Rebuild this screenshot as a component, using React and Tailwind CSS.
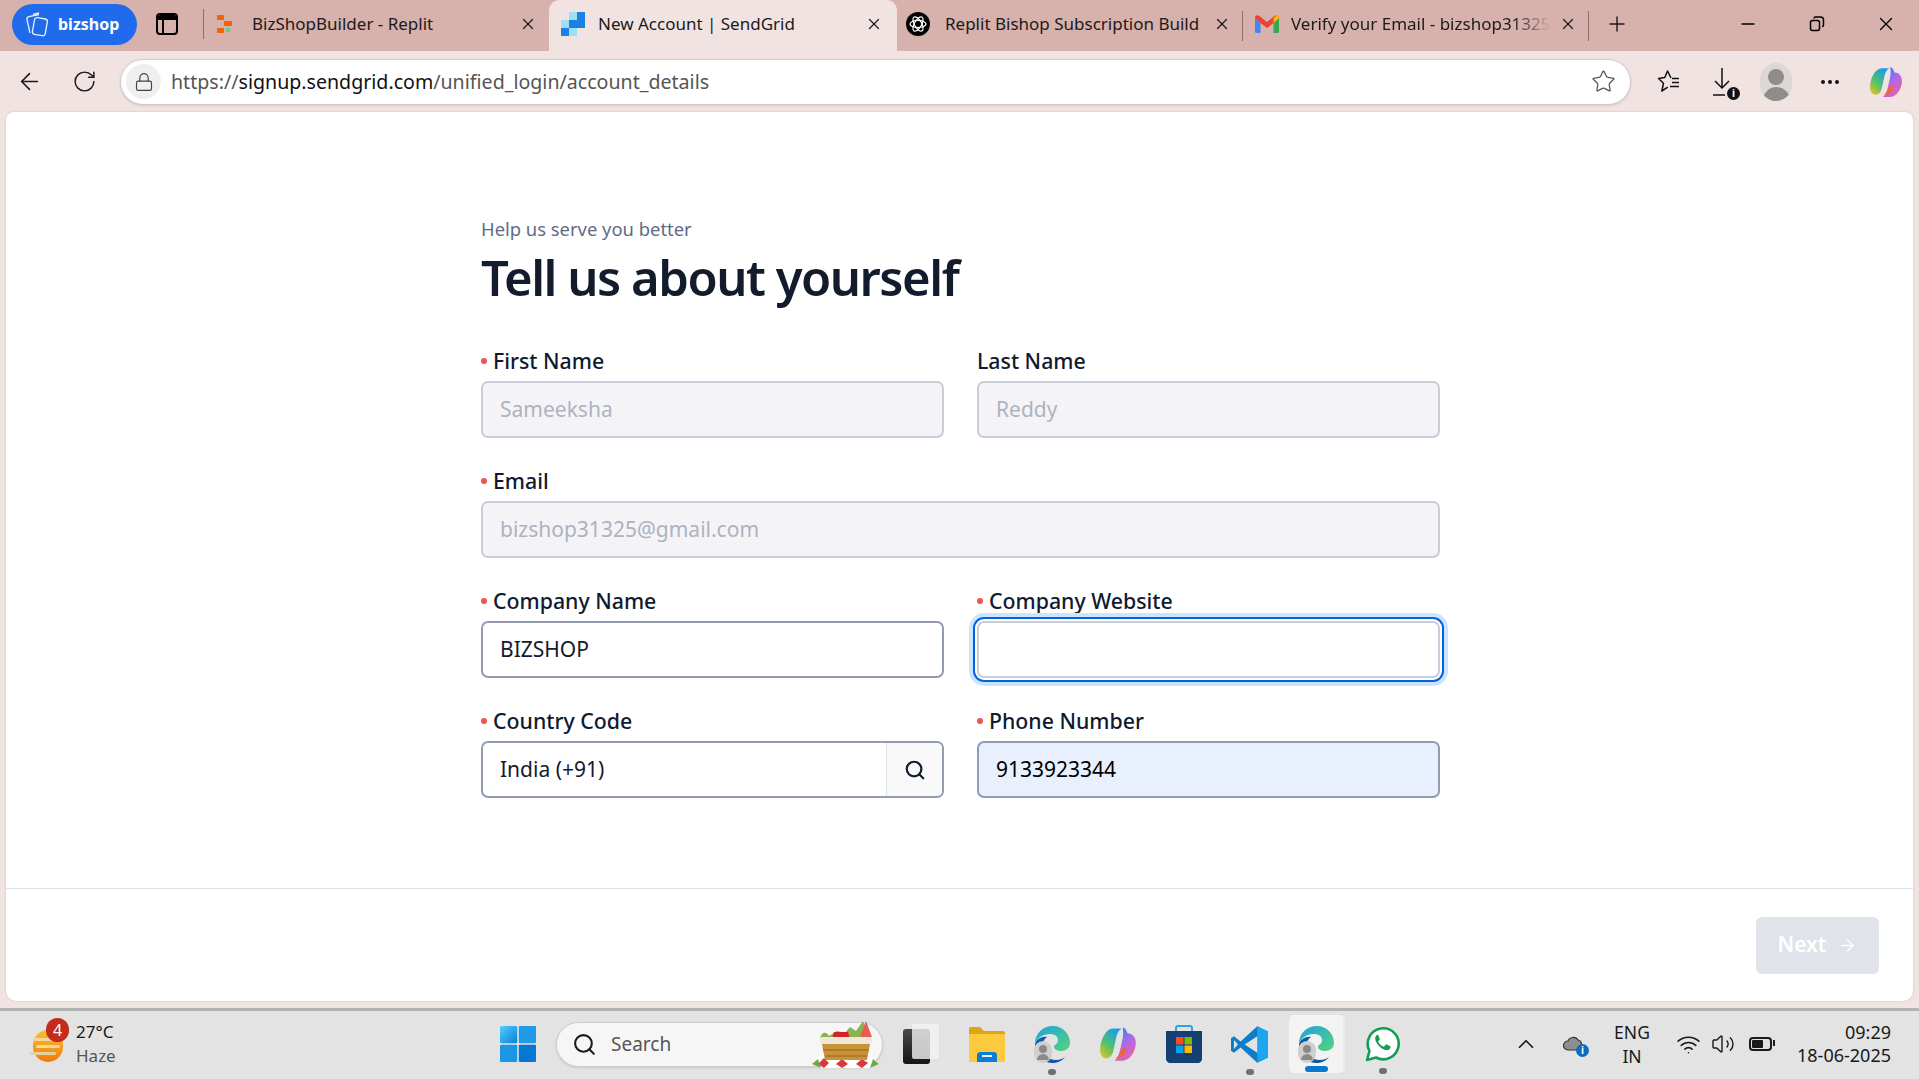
import React from 'react';
import { ArrowLeft, RotateCw, Lock, X, Plus, Minus, Star, Search, ArrowRight, ChevronUp, Wifi, Volume2, Ellipsis } from 'lucide-react';

const segoe = { fontFamily: '"Noto Sans", "Open Sans", sans-serif' };

const ReplitIcon = () => (
  <svg width="18" height="20" viewBox="0 0 18 20">
    <rect x="1" y="1" width="7" height="5" rx="1" fill="#f26207" />
    <rect x="8" y="7" width="8" height="5" rx="1" fill="#f26207" />
    <rect x="1" y="14" width="7" height="5" rx="1" fill="#f26207" />
    <circle cx="12" cy="16" r="2.500" fill="#5fd38d" />
  </svg>
);

const SendGridIcon = () => (
  <svg width="24" height="24" viewBox="0 0 24 24">
    <rect x="8" y="0" width="8" height="8" fill="#9ddff5" />
    <rect x="16" y="0" width="8" height="8" fill="#1a82e2" />
    <rect x="0" y="8" width="8" height="8" fill="#9ddff5" />
    <rect x="8" y="8" width="8" height="8" fill="#1a82e2" />
    <rect x="16" y="8" width="8" height="8" fill="#1a82e2" />
    <rect x="0" y="16" width="8" height="8" fill="#1a82e2" />
    <rect x="8" y="16" width="8" height="8" fill="#9ddff5" />
  </svg>
);

const OpenAiIcon = () => (
  <svg width="24" height="24" viewBox="0 0 24 24">
    <circle cx="12" cy="12" r="12" fill="#000" />
    <g fill="none" stroke="#fff" strokeWidth="1.200">
      <ellipse cx="12" cy="12" rx="8" ry="3.600" />
      <ellipse cx="12" cy="12" rx="8" ry="3.600" transform="rotate(60 12 12)" />
      <ellipse cx="12" cy="12" rx="8" ry="3.600" transform="rotate(120 12 12)" />
    </g>
  </svg>
);

const GmailIcon = () => (
  <svg width="24" height="18" viewBox="0 0 24 18">
    <path d="M0 3v13.500A1.500 1.500 0 0 0 1.500 18H5.500V8z" fill="#4285f4" />
    <path d="M24 3v13.500a1.500 1.500 0 0 1-1.500 1.500H18.500V8z" fill="#34a853" />
    <path d="M0 3c0-3 3-3.500 4.500-2L12 7l7.500-6c1.500-1.500 4.500-1 4.500 2l-5.500 5L12 13 5.500 8z" fill="#ea4335" />
    <path d="M18.500 8 24 3c0-1.500-.8-2.500-2-2.800L18.500 3z" fill="#fbbc04" />
  </svg>
);

const CopilotIcon = ({ size = 32 }) => (
  <svg width={size} height={size} viewBox="0 0 32 32">
    <defs>
      <linearGradient id="cpA" x1="0" y1="1" x2="0.6" y2="0">
        <stop offset="0" stopColor="#f6c21c" />
        <stop offset="0.5" stopColor="#4fc26b" />
        <stop offset="1" stopColor="#1d9fe8" />
      </linearGradient>
      <linearGradient id="cpB" x1="0.2" y1="0" x2="0.8" y2="1">
        <stop offset="0" stopColor="#2a7df0" />
        <stop offset="0.5" stopColor="#b06ae8" />
        <stop offset="1" stopColor="#f0609a" />
      </linearGradient>
    </defs>
    <path d="M12 3h7c-3 2-4 5-5 10l-2 9c-1 4-3 6-6 6-3 0-5-3-5-7 0-9 5-18 11-18z" fill="url(#cpA)" />
    <path d="M20 2c2 0 3 2 4 5 4 0 7 3 7 8 0 6-4 15-11 15h-7c3-2 4-6 5-10l2-9c.5-3 .5-7 0-9z" fill="url(#cpB)" />
    <path d="M14 28c4 1 8-3 9-8l-3-1-2 3c-1 3-2 5-4 6z" fill="#f2643c" />
  </svg>
);

const EdgeProfileIcon = () => (
  <div className="relative w-[36px] h-[38px]">
    <svg width="36" height="38" viewBox="0 0 36 38">
      <defs>
        <linearGradient id="edgeTop" x1="0" y1="0" x2="1" y2="1">
          <stop offset="0" stopColor="#1ba4e0" />
          <stop offset="1" stopColor="#56d37c" />
        </linearGradient>
      </defs>
      <path d="M1 19C1 8 9 1 19 1c10 0 17 8 17 17 0 5-4 8-9 8-4 0-7-2-7-4 0-3 4-2 4-7 0-4-4-6-8-6C9 9 3 13 1 19z" fill="url(#edgeTop)" />
      <path d="M1 19c2-5 7-8 12-7-3 2-5 6-5 10 0 7 6 13 14 13 3 0 7-1 9-3-3 4-8 6-13 6C8 38 1 29 1 19z" fill="#0c59a4" />
    </svg>
    <div className="absolute left-0 bottom-0 w-[18px] h-[22px] rounded-full bg-[#cfcfcf] flex flex-col items-center justify-center gap-[1px]">
      <div className="w-[8px] h-[8px] rounded-full bg-[#8a8a88]" />
      <div className="w-[12px] h-[6px] rounded-t-full bg-[#8a8a88]" />
    </div>
  </div>
);

const Tab = ({ icon, title, iconW, active, fade, right }) => (
  <div
    className={`relative h-full pb-[3px] flex items-center shrink-0 ${
      active ? 'w-[348px] bg-[#f1e3e2] rounded-t-[10px]' : 'w-[346px]'
    }`}
  >
    <div className={`${iconW} flex justify-center shrink-0`}>{icon}</div>
    <div
      className={`flex-1 min-w-0 whitespace-nowrap text-[17px] ${fade ? 'bg-gradient-to-r from-[#1c1a1a] from-85% to-transparent bg-clip-text text-transparent' : 'text-[#1c1a1a]'}`}
      style={segoe}
    >
      {title}
    </div>
    <X className={`w-[18px] h-[18px] ml-2 shrink-0 text-[#1c1a1a] ${active ? 'mr-[14px]' : 'mr-[12px]'}`} strokeWidth={1.600} />
    {right && <div className="absolute right-0 top-[11px] w-[1px] h-[30px] bg-[#8f6f6b]" />}
  </div>
);

const TabStrip = () => (
  <div className="h-[51px] bg-[#d7b1ab] flex items-center shrink-0">
    <div className="ml-[12px] mb-[3px] w-[125px] h-[41px] pl-[12px] rounded-full bg-[#206bec] flex items-center gap-[8px] text-white">
      <svg width="26" height="26" viewBox="0 0 26 26" fill="none" stroke="#fff" strokeWidth="1.300" opacity="0.9">
        <rect x="9.500" y="7" width="13" height="17" rx="2.500" transform="rotate(10 15 15)" />
        <path d="M6 22 3 8.500c-.3-1.500.5-2.500 2-2.800l10-2.200" />
        <path d="M9 3.500l6-1.500" />
      </svg>
      <span className="text-[16px] font-bold" style={segoe}>bizshop</span>
    </div>
    <div className="ml-[19px] mb-[3px] w-[22px] h-[22px] rounded-[4px] border-[2px] border-black relative shrink-0 overflow-hidden">
      <div className="h-[5px] bg-black" />
      <div className="absolute left-[4px] top-[4px] bottom-0 w-[2px] bg-black" />
    </div>
    <div className="ml-[25px] mb-[3px] w-[1px] h-[30px] bg-[#8f6f6b]" />
    <div className="h-full pb-[3px] w-[345px] shrink-0 flex items-center">
      <div className="ml-[12px] w-[36px] shrink-0"><ReplitIcon /></div>
      <span className="flex-1 text-[17px] text-[#1c1a1a]" style={segoe}>BizShopBuilder - Replit</span>
      <X className="w-[18px] h-[18px] mr-[12px] text-[#1c1a1a]" strokeWidth={1.600} />
    </div>
    <Tab active icon={<SendGridIcon />} iconW="w-[49px] pr-[2px]" title="New Account | SendGrid" />
    <Tab right icon={<OpenAiIcon />} iconW="w-[48px] pr-[6px]" title="Replit Bishop Subscription Build" />
    <Tab right fade icon={<GmailIcon />} iconW="w-[48px]" title="Verify your Email - bizshop31325" />
    <Plus className="ml-[16px] mb-[3px] w-[24px] h-[24px] text-[#1c1a1a]" strokeWidth={1.400} />
    <div className="ml-auto mb-[3px] flex items-center text-black">
      <div className="w-[56px] flex justify-center"><Minus className="w-[20px] h-[20px]" strokeWidth={2} /></div>
      <div className="ml-[13px] w-[56px] flex justify-center">
        <svg width="16" height="16" viewBox="0 0 16 16" fill="none" stroke="#000" strokeWidth="1.500">
          <rect x="1.500" y="4.500" width="9" height="10" rx="2" />
          <path d="M5 2.500c0-.8.6-1.500 1.500-1.500h5c1.800 0 3 1.200 3 3v5c0 .9-.6 1.500-1.500 1.500" />
        </svg>
      </div>
      <div className="ml-[13px] mr-[5px] w-[56px] flex justify-center"><X className="w-[22px] h-[22px]" strokeWidth={1.500} /></div>
    </div>
  </div>
);

const Toolbar = () => (
  <div className="h-[61px] bg-[#f1e3e2] flex items-center shrink-0">
    <ArrowLeft className="ml-[16px] w-[27px] h-[27px] text-[#1a1a1a]" strokeWidth={1.400} />
    <RotateCw className="ml-[29px] w-[25px] h-[25px] text-[#1a1a1a]" strokeWidth={1.400} />
    <div className="ml-[23px] w-[1511px] h-[46px] bg-white rounded-full border border-[#d3cccb] shadow-sm flex items-center" style={segoe}>
      <div className="ml-[5px] w-[35px] h-[35px] rounded-full bg-[#efefef] flex items-center justify-center">
        <Lock className="w-[20px] h-[20px] text-[#444]" strokeWidth={1.400} />
      </div>
      <div className="ml-[10px] text-[19.600px] text-[#555] whitespace-nowrap">
        https://<span className="text-[#111]">signup.sendgrid.com</span>/unified_login/account_details
      </div>
      <Star className="ml-auto mr-[14px] w-[25px] h-[25px] text-[#555]" strokeWidth={1.200} />
    </div>
    <div className="ml-[26px]">
      <svg width="26" height="26" viewBox="0 0 26 26" fill="none" stroke="#111" strokeWidth="1.500" strokeLinejoin="round">
        <path d="M14 9 10.500 2 7.800 8.500 1.500 9.500l5 4.800L4.800 22l6-3.800" />
        <path d="M15 9.500h7M15 13.500h7M13 17.500h9" />
      </svg>
    </div>
    <div className="relative ml-[29px] w-[24px] h-[34px]">
      <svg width="24" height="34" viewBox="0 0 24 34" fill="none" stroke="#111" strokeWidth="1.500">
        <path d="M10 3v20M3 16l7 7 7-7M1 30h12" />
      </svg>
      <div className="absolute right-[-4px] bottom-[-1px] w-[13px] h-[13px] rounded-full bg-[#111] text-white text-[10px] font-bold leading-[13px] text-center" style={segoe}>i</div>
    </div>
    <div className="ml-[24px] w-[32px] h-[38px] rounded-full bg-[#dcd8d6] overflow-hidden flex flex-col items-center pt-[6px]">
      <div className="w-[16px] h-[16px] rounded-full bg-[#8f8c89]" />
      <div className="mt-[2px] w-[27px] h-[14px] rounded-t-full bg-[#8f8c89]" />
    </div>
    <Ellipsis className="ml-[26px] w-[24px] h-[24px] text-[#111]" strokeWidth={2} />
    <div className="ml-[27px]"><CopilotIcon size={34} /></div>
  </div>
);

const Field = ({ label, required, className = '', children }) => (
  <div className={`flex flex-col ${className}`}>
    <div className="h-[23px] flex items-center text-[21.300px] font-medium leading-none text-[#0f1a2e]">
      {required && <span className="w-[6px] h-[6px] rounded-full bg-[#ef5350] mr-[6px]" />}
      {label}
    </div>
    <div className="mt-[9px]">{children}</div>
  </div>
);

const inputBase = 'h-[57px] rounded-[7px] border-2 px-[17px] flex items-center text-[21px]';

const Form = () => (
  <div className="w-[959px] ml-[475px] pt-[103px]">
    <p className="text-[18.400px] leading-[28px] text-[#606b85]">Help us serve you better</p>
    <h1 className="mt-[2px] text-[49px] leading-[64px] font-semibold tracking-[-0.030em] text-[#121c2d]">Tell us about yourself</h1>
    <div className="mt-[40px] grid grid-cols-2 gap-x-[33px] gap-y-[31px]">
      <Field required label="First Name">
        <div className={`${inputBase} bg-[#f4f4f6] border-[#cacdd8] text-[#aeb2c1]`}>Sameeksha</div>
      </Field>
      <Field label="Last Name">
        <div className={`${inputBase} bg-[#f4f4f6] border-[#cacdd8] text-[#aeb2c1]`}>Reddy</div>
      </Field>
      <Field required label="Email" className="col-span-2">
        <div className={`${inputBase} bg-[#f4f4f6] border-[#cacdd8] text-[#aeb2c1]`}>bizshop31325@gmail.com</div>
      </Field>
      <Field required label="Company Name">
        <div className={`${inputBase} bg-white border-[#939bb3] text-[#121c2d]`}>BIZSHOP</div>
      </Field>
      <Field required label="Company Website">
        <div className={`${inputBase} bg-white border-[#cacdd8] shadow-[0_0_0_2px_#ffffff,0_0_0_4px_#0263e0,0_0_0_8px_#cce4ff]`} />
      </Field>
      <Field required label="Country Code">
        <div className={`${inputBase} bg-white border-[#939bb3] text-[#121c2d] !pr-0 overflow-hidden`}>
          <span className="flex-1">India (+91)</span>
          <div className="w-[56px] h-full bg-[#f9f9fa] border-l border-[#e1e3ea] flex items-center justify-center">
            <Search className="w-[22px] h-[22px] text-[#121c2d]" strokeWidth={2.400} />
          </div>
        </div>
      </Field>
      <Field required label="Phone Number">
        <div className={`${inputBase} bg-[#e8f0fd] border-[#939bb3] text-black`}>9133923344</div>
      </Field>
    </div>
  </div>
);

const Weather = () => (
  <div className="relative ml-[30px] w-[34px] h-[34px] mt-[2px] shrink-0">
    <div className="absolute left-[3px] top-[2px] w-[30px] h-[32px] rounded-full bg-gradient-to-b from-[#fbc02d] to-[#ef7a0a]" />
    <div className="absolute left-[4px] top-[10px] w-[18px] h-[3px] bg-[#f1d9a0] rounded-full" />
    <div className="absolute left-[6px] top-[17px] w-[24px] h-[3px] bg-[#f1d9a0] rounded-full" />
    <div className="absolute left-0 top-[24px] w-[26px] h-[3px] bg-[#e6cf9e] rounded-full" />
    <div className="absolute left-[16px] top-[-10px] w-[23px] h-[24px] rounded-full bg-[#c42b1c] text-white text-[16px] leading-[24px] text-center" style={segoe}>4</div>
  </div>
);

const WindowsLogo = () => (
  <svg width="36" height="36" viewBox="0 0 36 36">
    <defs>
      <linearGradient id="winA" x1="0" y1="0" x2="1" y2="1">
        <stop offset="0" stopColor="#52cffc" />
        <stop offset="1" stopColor="#0b7fd8" />
      </linearGradient>
    </defs>
    <rect x="0" y="0" width="17.200" height="17.200" rx="1.500" fill="url(#winA)" />
    <rect x="18.800" y="0" width="17.200" height="17.200" rx="1" fill="#1f9be8" />
    <rect x="0" y="18.800" width="17.200" height="17.200" rx="1" fill="#1a96e4" />
    <rect x="18.800" y="18.800" width="17.200" height="17.200" rx="1" fill="#0677d2" />
  </svg>
);

const Basket = () => (
  <svg width="70" height="50" viewBox="0 0 70 50">
    <path d="M2 46 14 34h44l11 12-10 4H12z" fill="#fff" />
    <path d="M8 46l6-6 5 5-5 5zM26 46l6-5 6 5-6 4zM46 46l6-5 6 4-6 5z" fill="#d73a3a" />
    <path d="M2 46 8 41l3 9zM69 46l-6-5-3 9z" fill="#6fa84a" />
    <path d="M10 20c2-6 6-7 9-2l8-5 8 2 5-6 6 4 7-10 7 17z" fill="#89b34c" />
    <path d="M24 14h14l2 7H22z" fill="#d2232a" />
    <path d="M50 19 56 3l6 16z" fill="#e85d52" />
    <rect x="10" y="19" width="52" height="7" rx="2" fill="#efe8d8" />
    <path d="M12 26h48l-3 16H15z" fill="#c89437" />
    <path d="M13 32h46M15 38h42" stroke="#8f6520" strokeWidth="1" />
  </svg>
);

const TaskView = () => (
  <div className="relative w-[36px] h-[40px]">
    <div className="absolute left-0 bottom-0 w-[27px] h-[35px] rounded-[3px] bg-gradient-to-b from-[#4a4a4a] to-[#161616]" />
    <div className="absolute right-0 top-0 w-[27px] h-[35px] rounded-[2px] bg-[#f3f3f3]/80" />
  </div>
);

const Folder = () => (
  <svg width="36" height="36" viewBox="0 0 36 36">
    <path d="M0 3c0-1.500 1-2 2-2h9l4 4h19c1 0 2 1 2 2v4H0z" fill="#dba514" />
    <path d="M0 8h36v27c0 .5-.5 1-1 1H1c-.5 0-1-.5-1-1z" fill="#fdca3f" />
    <path d="M8 36v-7c0-1.500 1-3 3-3h14c2 0 3 1.500 3 3v7z" fill="#0a7ed4" />
    <rect x="13" y="29" width="10" height="2" fill="#fff" opacity="0.9" />
  </svg>
);

const Store = () => (
  <svg width="36" height="38" viewBox="0 0 36 38">
    <path d="M10 7V3c0-1.500 1-2 2-2h12c1 0 2 .5 2 2v4" fill="none" stroke="#29a6e3" strokeWidth="2" />
    <path d="M0 6h36v28c0 2-2 4-4 4H4c-2 0-4-2-4-4z" fill="#163f74" />
    <rect x="10" y="12" width="7.500" height="7.500" fill="#f25022" />
    <rect x="18.500" y="12" width="7.500" height="7.500" fill="#7fba00" />
    <rect x="10" y="20.500" width="7.500" height="7.500" fill="#00a4ef" />
    <rect x="18.500" y="20.500" width="7.500" height="7.500" fill="#ffb900" />
  </svg>
);

const VsCode = () => (
  <svg width="37" height="37" viewBox="0 0 100 100">
    <path d="M71 99 100 85V15L71 1 26 42 8 28 0 33v34l8 5 18-14z" fill="#0d7dc7" />
    <path d="M71 1 100 15v70L71 99z" fill="#1fa5ef" />
    <path d="M71 28 37 50l34 22z" fill="#e3e3e3" />
    <path d="M8 38l11 12L8 62z" fill="#e3e3e3" />
  </svg>
);

const WhatsApp = () => (
  <svg width="36" height="36" viewBox="0 0 36 36" fill="none">
    <path d="M2 34l2.500-9A15.500 15.500 0 1 1 11 31.500z" fill="#fff" stroke="#169c55" strokeWidth="2.600" strokeLinejoin="round" />
    <path d="M12 9c-2 1.500-2.500 4-.5 7.500 2 3.500 5 6.500 9 7.500 2.500.6 4.500-.5 5-2.500.2-.8 0-1-.7-1.400l-3-1.500c-.6-.3-1-.2-1.400.3l-1 1.300c-.4.400-.7.400-1.200.2-2-.9-3.800-2.600-4.800-4.500-.2-.5-.2-.8.200-1.100l.9-1.100c.3-.4.300-.8.100-1.200L13.400 9.300C13 8.600 12.600 8.600 12 9z" fill="#169c55" />
  </svg>
);

const Dot = () => (
  <div className="absolute left-1/2 -translate-x-1/2 -bottom-[12px] w-[8px] h-[6px] rounded-full bg-[#707070]" />
);

const Taskbar = () => (
  <div className="h-[71px] shrink-0 pb-[2px] border-t-[3px] border-[#b3b3b3] bg-[#e3e3e3] flex items-center text-[#1a1a1a]" style={segoe}>
    <Weather />
    <div className="ml-[12px] w-[60px] leading-[24px] text-[17px]">
      <div>27°C</div>
      <div className="text-[#555]">Haze</div>
    </div>
    <div className="ml-[364px]"><WindowsLogo /></div>
    <div className="ml-[20px] w-[327px] h-[45px] rounded-full bg-[#f6f6f6] border border-[#cfcfcf] shadow-sm flex items-center relative">
      <Search className="ml-[15px] w-[25px] h-[25px] text-[#1a1a1a]" strokeWidth={2} />
      <span className="ml-[14px] text-[19px] text-[#555]">Search</span>
      <div className="absolute right-[2px] -top-[5px]"><Basket /></div>
    </div>
    <div className="ml-[20px]"><TaskView /></div>
    <div className="ml-[30px] w-[36px]"><Folder /></div>
    <div className="ml-[29px] relative"><EdgeProfileIcon /><Dot /></div>
    <div className="ml-[29px]"><CopilotIcon size={38} /></div>
    <div className="ml-[29px]"><Store /></div>
    <div className="ml-[29px] relative"><VsCode /><Dot /></div>
    <div className="relative ml-[21px] w-[54px] h-[58px] rounded-[5px] bg-[#f3f3f3] shadow-[2px_0_0_#ececec] flex items-center justify-center">
      <EdgeProfileIcon />
      <div className="absolute bottom-[1px] left-[16px] w-[23px] h-[6px] rounded-full bg-[#0b78d0]" />
    </div>
    <div className="ml-[22px] relative"><WhatsApp /><Dot /></div>
    <ChevronUp className="ml-[112px] w-[26px] h-[26px] text-[#1a1a1a]" strokeWidth={1.600} />
    <div className="relative ml-[24px] w-[24px] h-[20px]">
      <svg width="24" height="20" viewBox="0 0 24 20">
        <path d="M5 16a4.500 4.500 0 0 1 0-9c1-4 8-5 10-1a4 4 0 0 1 3 6v4z" fill="#8e8e8e" stroke="#333" strokeWidth="1.200" />
      </svg>
      <div className="absolute right-[-2px] bottom-[-3px] w-[13px] h-[13px] rounded-full bg-[#0f6cbd] text-white text-[10px] font-bold leading-[13px] text-center">i</div>
    </div>
    <div className="ml-[22px] w-[46px] text-center text-[17.500px] leading-[24px]">ENG<br />IN</div>
    <Wifi className="ml-[21px] w-[25px] h-[25px] text-[#1a1a1a]" strokeWidth={1.500} />
    <Volume2 className="ml-[10px] w-[24px] h-[24px] text-[#1a1a1a]" strokeWidth={1.400} />
    <div className="ml-[14px] w-[23px] h-[14px] rounded-[4px] border-2 border-[#1a1a1a] p-[1px] relative">
      <div className="w-[11px] h-full bg-[#1a1a1a] rounded-[1px]" />
      <div className="absolute -right-[5px] top-[1px] w-[2px] h-[6px] bg-[#1a1a1a]" />
    </div>
    <div className="ml-[25px] w-[94px] text-right text-[18px] leading-[23px] -mt-[1px]">
      <div>09:29</div>
      <div className="whitespace-nowrap">18-06-2025</div>
    </div>
  </div>
);

export default function App() {
  return (
    <div className="w-screen h-screen overflow-hidden flex flex-col bg-[#f1e3e2]" style={{ fontFamily: '"Noto Sans", Inter, sans-serif' }}>
      <TabStrip />
      <Toolbar />
      <div className="flex-1 min-h-0 mx-[6px] mb-[7px] bg-white rounded-t-[8px] rounded-b-[10px] shadow-[0_0_2px_#cbbcbb] flex flex-col">
        <div className="flex-1">
          <Form />
        </div>
        <div className="h-[113px] border-t border-[#e1e3ea] flex items-center justify-end pr-[34px]">
          <div className="w-[123px] h-[57px] rounded-[6px] bg-[#e1e3ea] flex items-center justify-center gap-[12px] text-white text-[21px] font-semibold">
            Next
            <ArrowRight className="w-[19px] h-[19px]" strokeWidth={1.600} />
          </div>
        </div>
      </div>
      <Taskbar />
    </div>
  );
}
